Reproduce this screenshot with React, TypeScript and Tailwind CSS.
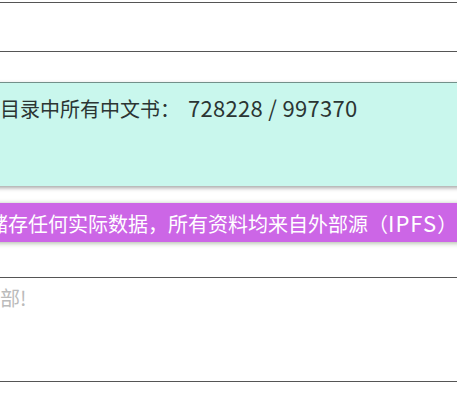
import React from 'react';

const font = { fontFamily: '"Noto Sans CJK SC", "Noto Sans", sans-serif' };

export default function App() {
  return (
    <div className="w-[457px] h-[416px] overflow-hidden bg-white" style={font}>
      <div className="pt-[2px]">
        {/* search input, sides fall outside the view */}
        <div className="h-[50px] border-y border-[#555]" />

        {/* stats card */}
        <div className="mt-[30px] -mx-[10px] h-[104px] bg-[#c9f7ed] border-t border-[#73908a] shadow-[0_2px_4px_rgba(0,0,0,0.35)]">
          <p className="pl-[10px] pt-[10px] text-[20px] leading-[28px] text-[#2b3533] whitespace-nowrap">
            目录中所有中文书：<span className="ml-[8px] text-[22px] tracking-[0.3px]">728228 / 997370</span>
          </p>
        </div>

        {/* notice bar */}
        <div className="mt-[17px] -mx-[10px] h-[39px] bg-[#cc66e6] shadow-[0_1px_5px_rgba(60,90,40,0.45)] flex items-center overflow-hidden">
          <p className="-ml-[2px] text-[20px] leading-[28px] text-white whitespace-nowrap">
            储存任何实际数据，所有资料均来自外部源（<span className="text-[22px] tracking-[1px]">IPFS</span>）
          </p>
        </div>

        {/* message box */}
        <div className="mt-[35px] h-[105px] border-y border-[#555] overflow-hidden">
          <p className="-ml-[20px] pt-[6px] text-[20px] leading-[28px] text-[#bbbbbb] whitespace-nowrap">
            全部!
          </p>
        </div>
      </div>
    </div>
  );
}
